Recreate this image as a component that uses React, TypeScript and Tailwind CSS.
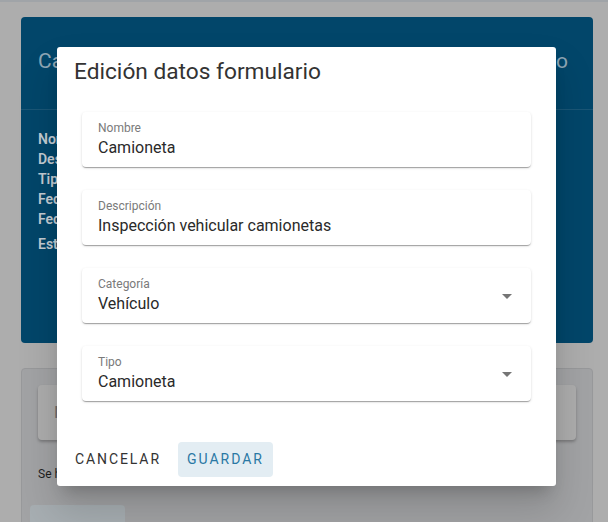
import React from "react"

const fieldShadow =
  "shadow-[0_2px_1px_-1px_rgba(0,0,0,0.2),0_1px_1px_0_rgba(0,0,0,0.14),0_1px_3px_0_rgba(0,0,0,0.12)]"

function Field({ label, value, select }: { label: string; value: string; select?: boolean }) {
  return (
    <div className={`relative h-[55px] rounded bg-white px-4 pt-2 ${fieldShadow}`}>
      <div className="text-[12px] leading-4 text-[#7a7a7a]">{label}</div>
      <div className="text-[16px] leading-6 text-[#2a2a2a]">{value}</div>
      {select && (
        <svg className="absolute right-[19px] top-[26px]" width="10" height="5" viewBox="0 0 10 5">
          <path d="M0 0h10L5 5z" fill="#757575" />
        </svg>
      )}
    </div>
  )
}

export default function App() {
  return (
    <div className="relative h-[522px] w-[608px] overflow-hidden bg-[#adadad] font-['Roboto',sans-serif]">
      {/* Page behind the backdrop */}
      <div className="h-[2px] bg-[#a0a4a8]" />
      <div className="pl-[21px] pr-[15px] pt-[15px]">
        <div className="h-[326px] rounded bg-[#02466a]">
          <div className="flex h-[93px] items-center justify-between border-b border-[#1a5676] pl-[17px] pr-[25px] pb-[2px] text-[21px] text-[#8fa6b5]">
            <span>Camionetas</span>
            <span>Nuevo</span>
          </div>
          <div className="px-[17px] pt-[19px] text-[14px] font-semibold leading-5 text-[#c3ccd3]">
            <div>Nombre</div>
            <div>Descripción</div>
            <div>Tipo</div>
            <div>Fecha</div>
            <div>Fecha</div>
            <div className="mt-[5px]">Estado</div>
          </div>
        </div>

        <div className="mt-[25px] h-[200px] rounded border border-[#98999b] bg-[#a2a3a5] px-4 pt-4">
          <div className="flex h-[55px] items-center rounded bg-[#adadad] px-4 text-[17px] text-[#6b6b6b] shadow-[0_2px_3px_rgba(0,0,0,0.25)]">
            N
          </div>
          <div className="mt-[25px] text-[12px] text-[#1e1e1e]">Se ha</div>
          <div className="-ml-2 mt-[22px] h-8 w-[95px] rounded bg-[#a7aeb2]" />
        </div>
      </div>

      {/* Dialog */}
      <div className="absolute left-[57px] top-[47px] flex h-[439px] w-[499px] flex-col rounded-[3px] bg-white px-[25px] pt-[11px] pb-[9px] shadow-[0_11px_15px_-7px_rgba(0,0,0,0.2),0_24px_38px_3px_rgba(0,0,0,0.14)]">
        <h2 className="-ml-2 h-7 text-[22.7px] leading-7 text-[#333]">Edición datos formulario</h2>
        <div className="mt-[26px] flex flex-col gap-[23px]">
          <Field label="Nombre" value="Camioneta" />
          <Field label="Descripción" value="Inspección vehicular camionetas" />
          <Field label="Categoría" value="Vehículo" select />
          <Field label="Tipo" value="Camioneta" select />
        </div>
        <div className="mt-[41px] flex items-center gap-[9px] -ml-[15px]">
          <button className="h-[35px] rounded px-[8px] text-[14px] tracking-[1.9px] text-[#333]">
            CANCELAR
          </button>
          <button className="h-[35px] rounded bg-[#e3edf3] px-[9px] text-[14px] tracking-[2px] text-[#2a78a4]">
            GUARDAR
          </button>
        </div>
      </div>
    </div>
  )
}
